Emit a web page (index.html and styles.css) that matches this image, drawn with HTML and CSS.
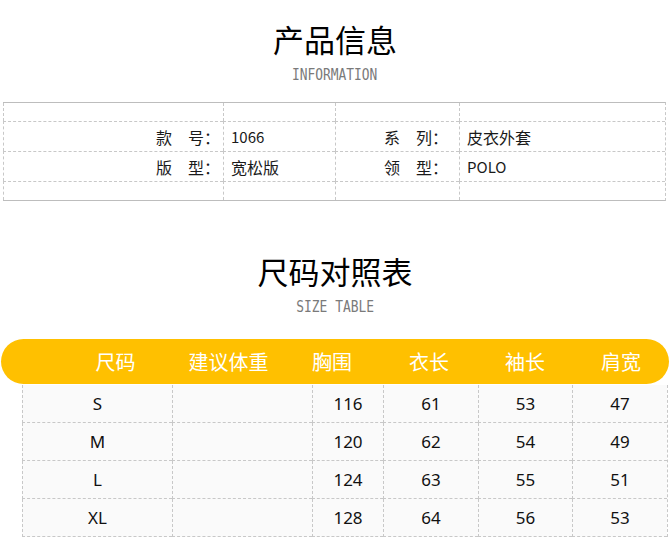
FILE: index.html
```html
<!DOCTYPE html>
<html lang="zh">
<head>
<meta charset="utf-8">
<link rel="stylesheet" href="styles.css">
</head>
<body>
<section class="info">
  <h1 class="title">产品信息</h1>
  <div class="subtitle"><span class="sub-text">INFORMATION</span></div>
  <div class="info-grid">
    <div class="cell edge"></div><div class="cell edge"></div><div class="cell edge"></div><div class="cell edge"></div>
    <div class="cell row label l1">款　号：</div><div class="cell row val latin">1066</div><div class="cell row label l3">系　列：</div><div class="cell row val">皮衣外套</div>
    <div class="cell row label l1">版　型：</div><div class="cell row val">宽松版</div><div class="cell row label l3">领　型：</div><div class="cell row val latin">POLO</div>
    <div class="cell edge top"></div><div class="cell edge top"></div><div class="cell edge top"></div><div class="cell edge top"></div>
  </div>
</section>
<section class="size">
  <h2 class="title title2">尺码对照表</h2>
  <div class="subtitle sub2"><span class="sub-text">SIZE TABLE</span></div>
  <div class="size-head">
    <span>尺码</span><span>建议体重</span><span>胸围</span><span>衣长</span><span>袖长</span><span>肩宽</span>
  </div>
  <div class="size-grid">
    <div class="sc">S</div><div class="sc"></div><div class="sc">116</div><div class="sc">61</div><div class="sc">53</div><div class="sc">47</div>
    <div class="sc">M</div><div class="sc"></div><div class="sc">120</div><div class="sc">62</div><div class="sc">54</div><div class="sc">49</div>
    <div class="sc">L</div><div class="sc"></div><div class="sc">124</div><div class="sc">63</div><div class="sc">55</div><div class="sc">51</div>
    <div class="sc">XL</div><div class="sc"></div><div class="sc">128</div><div class="sc">64</div><div class="sc">56</div><div class="sc">53</div>
  </div>
</section>
</body>
</html>
```
FILE: styles.css
```css
html, body {
  margin: 0;
  padding: 0;
  background: #fff;
}
body {
  width: 670px;
  height: 537px;
  overflow: hidden;
  font-family: "Noto Sans CJK SC", "Noto Sans", sans-serif;
  color: #111;
}
.title {
  margin: 0;
  padding-top: 19px;
  height: 40px;
  line-height: 40px;
  font-size: 31px;
  font-weight: 400;
  text-align: center;
  color: #000;
}
.subtitle {
  margin-top: 8px;
  height: 16px;
  line-height: 16px;
  font-family: "DejaVu Sans Mono", "Liberation Mono", monospace;
  font-size: 15px;
  color: #7a7a7a;
  text-align: center;
}
.sub-text {
  display: inline-block;
  transform: scaleX(0.86);
}
.info-grid {
  margin: 19px 0 0 3px;
  width: 663px;
  box-sizing: border-box;
  display: grid;
  grid-template-columns: 220px 112px 124px 206px;
  grid-template-rows: 18px 30px 30px 19px;
  border-top: 1px solid #bdbdbd;
  border-bottom: 1px solid #bdbdbd;
  border-right: 1px dashed #c8c8c8;
}
.cell {
  border-left: 1px dashed #c8c8c8;
  font-size: 16px;
  color: #1a1a1a;
  display: flex;
  align-items: center;
}
.cell.latin {
  font-size: 15px;
}
.cell.row, .cell.top {
  border-top: 1px dashed #c8c8c8;
}
.label {
  justify-content: flex-end;
}
.l1 { padding-right: 3px; }
.l3 { padding-right: 11px; }
.val { padding-left: 7px; }
.title2 {
  padding-top: 50px;
}
.sub2 {
  margin-top: 8px;
}
.size-head {
  margin: 24px 1px 0 1px;
  height: 45px;
  border-radius: 23px;
  background: #ffc000;
  display: grid;
  grid-template-columns: 117px 109px 98px 96px 96px 96px;
  padding-left: 56px;
  align-items: center;
  color: #fff;
  font-size: 20px;
  position: relative;
  z-index: 1;
}
.size-head span {
  text-align: center;
}
.size-grid {
  margin: 1px 0 0 22px;
  width: 646px;
  box-sizing: border-box;
  display: grid;
  grid-template-columns: 150px 140px 71px 95px 94px 95px;
  grid-auto-rows: 38px;
  border-right: 1px dashed #c8c8c8;
}
.sc {
  border-left: 1px dashed #c8c8c8;
  border-bottom: 1px dashed #c8c8c8;
  background: #fafafa;
  display: flex;
  align-items: center;
  justify-content: center;
  font-family: "Noto Sans", "Noto Sans CJK SC", sans-serif;
  font-size: 17px;
  color: #111;
}
```
